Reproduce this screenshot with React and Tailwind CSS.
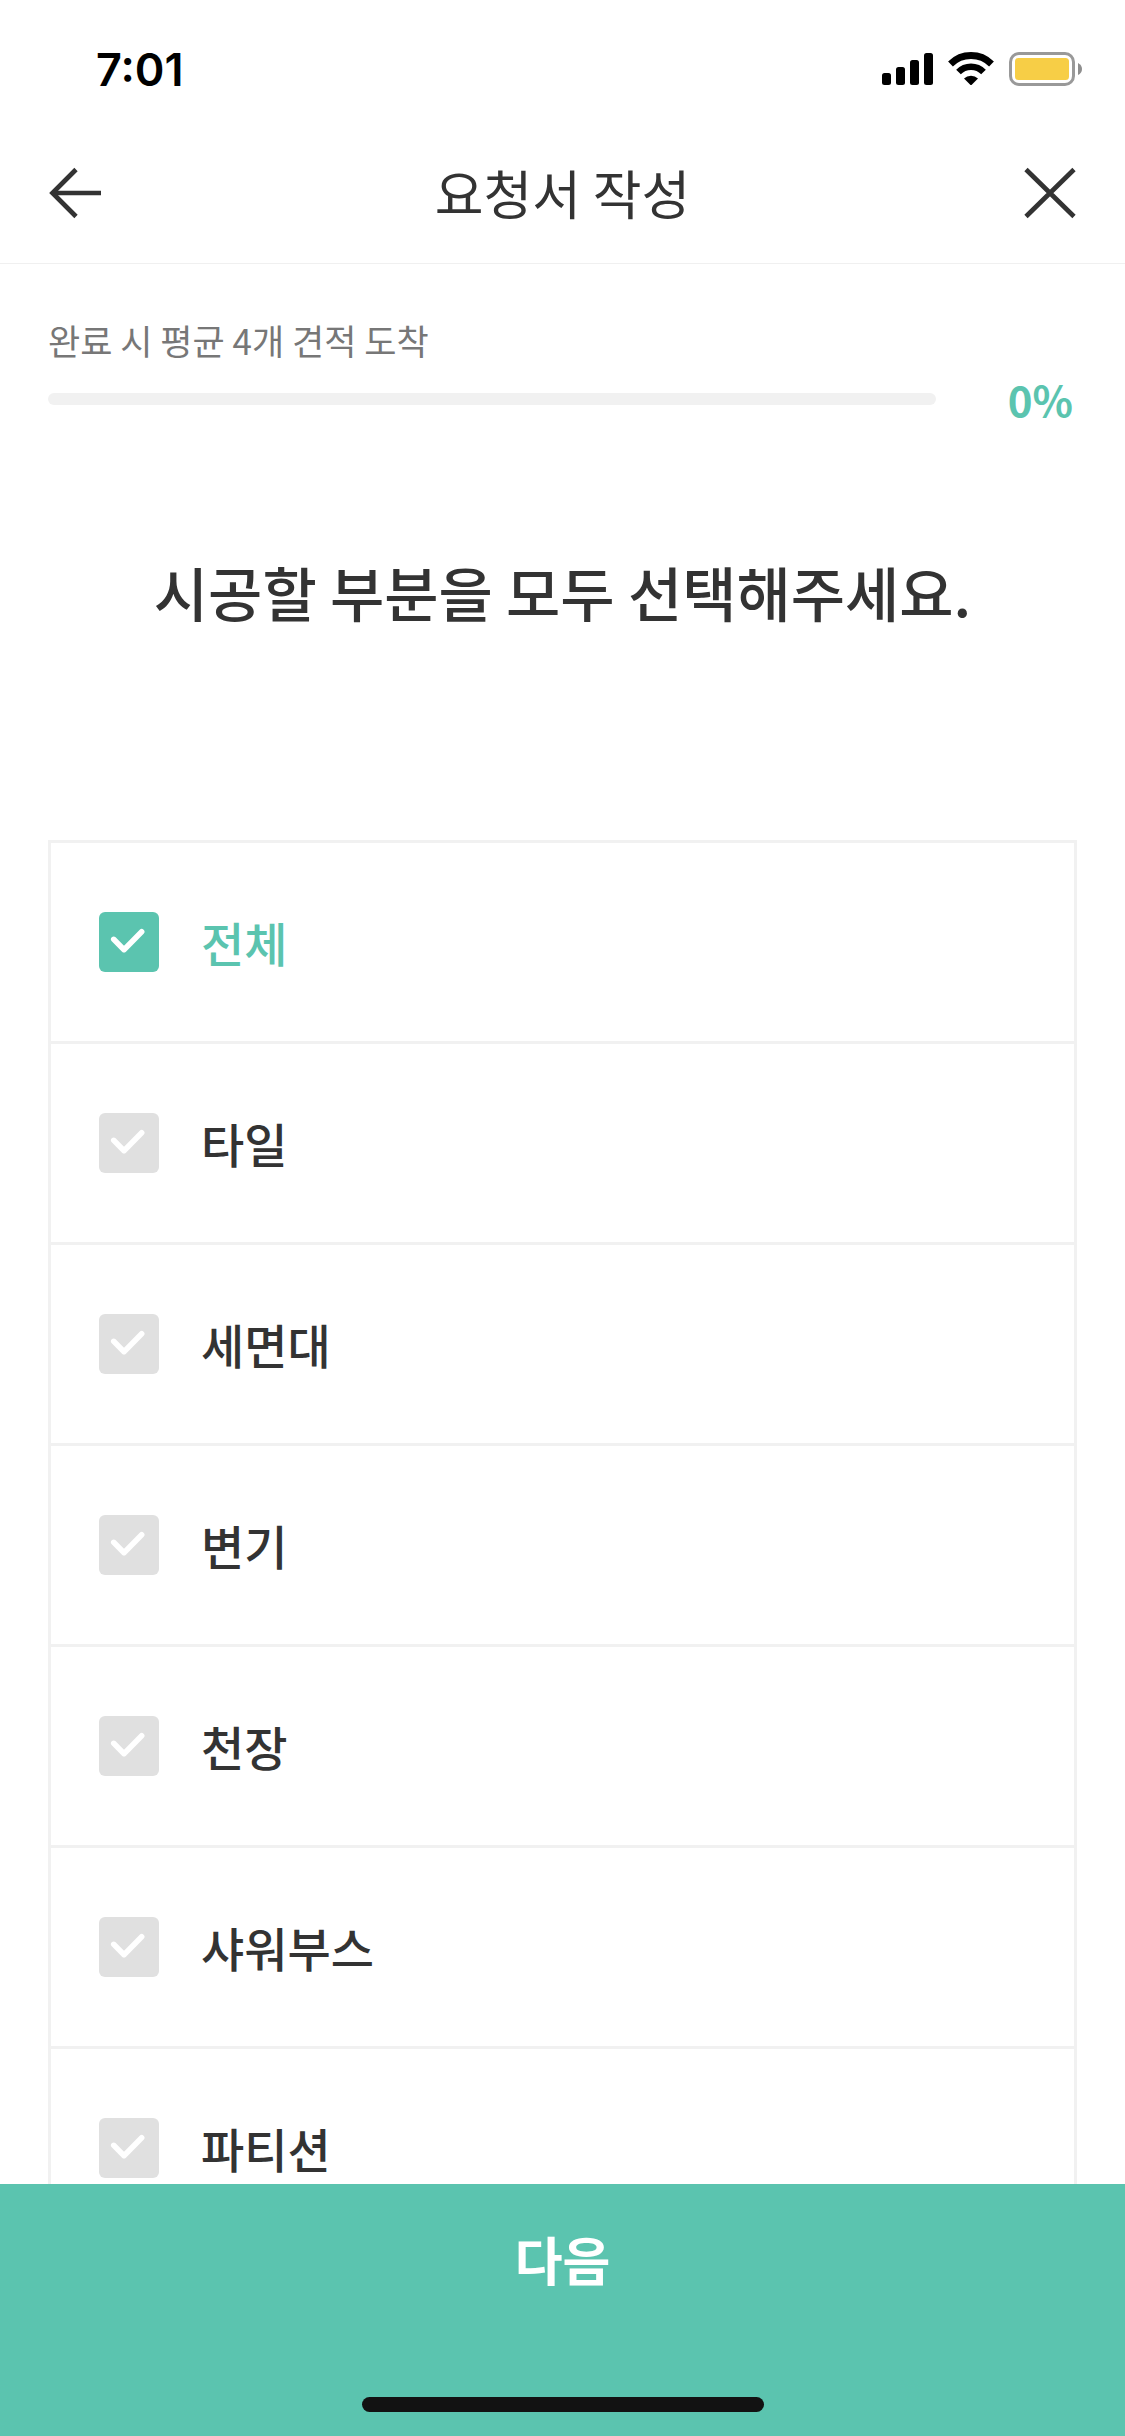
import React, { useState } from 'react';

const OPTIONS = ['전체', '타일', '세면대', '변기', '천장', '샤워부스', '파티션'];

function StatusBar() {
  return (
    <div className="flex h-[114px] shrink-0 items-center justify-between pt-6 pr-[42px] pl-24">
      <span className="font-['Inter',sans-serif] text-[45px] leading-none font-semibold text-black">7:01</span>
      <div className="flex items-center gap-[15px]">
        <svg className="h-[34px] w-[51px]" viewBox="0 0 51 34" fill="#000" aria-hidden="true">
          <rect x="0" y="21" width="9" height="12" rx="2.5" />
          <rect x="14" y="15" width="9" height="18" rx="2.5" />
          <rect x="28" y="8" width="9" height="25" rx="2.5" />
          <rect x="42" y="1" width="9" height="32" rx="2.5" />
        </svg>
        <svg className="h-[34px] w-[46px]" viewBox="0 0 46 34" aria-hidden="true">
          <path d="M2.500 12 A29 29 0 0 1 43.500 12" fill="none" stroke="#000" strokeWidth="6.800" />
          <path d="M10.500 20 A17.500 17.500 0 0 1 35.500 20" fill="none" stroke="#000" strokeWidth="6.500" />
          <path d="M16 26.500 A10 10 0 0 1 30 26.500 L24 32.500 Q23 33.500 22 32.500 Z" fill="#000" />
        </svg>
        <svg className="h-[34px] w-[74px]" viewBox="0 0 74 34" aria-hidden="true">
          <rect x="1.5" y="1.5" width="63" height="31" rx="8.5" fill="none" stroke="#999" strokeWidth="3" />
          <rect x="6" y="6" width="54" height="22" rx="3.5" fill="#f7ce46" />
          <path d="M69 11 Q73 13 73 17 Q73 21 69 23 Z" fill="#8e8e8e" />
        </svg>
      </div>
    </div>
  );
}

function Header() {
  return (
    <header className="flex h-[150px] shrink-0 items-center justify-between border-b border-[#f0f0f0] px-12 pt-2">
      <button type="button" aria-label="뒤로">
        <svg className="h-14 w-14" viewBox="0 0 56 56" fill="none" stroke="#333" strokeWidth="4.700" aria-hidden="true">
          <path d="M28 4.500 L4.500 28 L28 51.500" />
          <path d="M5 28 H53" />
        </svg>
      </button>
      <h1 className="text-[53px] leading-none">요청서 작성</h1>
      <button type="button" aria-label="닫기">
        <svg className="h-14 w-14" viewBox="0 0 56 56" fill="none" stroke="#333" strokeWidth="4.700" aria-hidden="true">
          <path d="M5 4.500 L53 51.500 M53 4.500 L5 51.500" />
        </svg>
      </button>
    </header>
  );
}

function Progress({ value }) {
  return (
    <section className="px-12 pt-[52px]">
      <p className="text-[35px] leading-[48px] text-[#777]">완료 시 평균 4개 견적 도착</p>
      <div className="flex items-center">
        <div className="h-3 flex-1 overflow-hidden rounded-full bg-[#f1f1f1]">
          <div className="h-full bg-[#5bc4af]" style={{ width: `${value}%` }} />
        </div>
        <span className="w-[141px] pr-1 text-right text-[42px] leading-[70px] font-bold text-[#5bc4af]">
          {value}%
        </span>
      </div>
    </section>
  );
}

function OptionRow({ label, checked, onChange }) {
  return (
    <li className="border-b-[3px] border-[#f1f1f1]">
      <label className="flex h-[198px] cursor-pointer items-center gap-[42px] px-12">
        <span className="grid shrink-0">
          <input
            type="checkbox"
            checked={checked}
            onChange={onChange}
            className="col-start-1 row-start-1 h-[60px] w-[60px] appearance-none rounded-md bg-[#e0e0e0] checked:bg-[#5bc4af]"
          />
          <svg
            className="pointer-events-none col-start-1 row-start-1 h-[60px] w-[60px]"
            viewBox="0 0 60 60"
            fill="none"
            stroke="#fff"
            strokeWidth="5.500"
            strokeLinecap="round"
            strokeLinejoin="round"
            aria-hidden="true"
          >
            <path d="M14.700 27.300 L25 37.700 L42.700 19.700" />
          </svg>
        </span>
        <span className={`text-[47px] leading-[60px] font-medium ${checked ? 'text-[#5bc4af]' : 'text-[#333]'}`}>
          {label}
        </span>
      </label>
    </li>
  );
}

export default function App() {
  const [selected, setSelected] = useState(['전체']);

  const toggle = (label) => {
    setSelected((prev) => (prev.includes(label) ? prev.filter((item) => item !== label) : [...prev, label]));
  };

  return (
    <div className="flex h-screen flex-col bg-white font-['Noto_Sans_CJK_KR',sans-serif] text-[#333]">
      <StatusBar />
      <Header />
      <main className="min-h-0 flex-1 overflow-y-auto [scrollbar-width:none]">
        <Progress value={0} />
        <h2 className="px-12 pt-[114px] text-center text-[59px] leading-[88px] font-medium">
          시공할 부분을 모두 선택해주세요.
        </h2>
        <ul className="mx-12 mt-[204px] border-x-[3px] border-t-[3px] border-[#f1f1f1]">
          {OPTIONS.map((label) => (
            <OptionRow
              key={label}
              label={label}
              checked={selected.includes(label)}
              onChange={() => toggle(label)}
            />
          ))}
        </ul>
      </main>
      <footer className="flex shrink-0 flex-col items-center bg-[#5bc4af] pb-6">
        <button type="button" className="h-[213px] w-full pb-16 text-[52px] leading-none font-bold text-white">
          다음
        </button>
        <div className="h-[15px] w-[402px] rounded-full bg-[#121212]" />
      </footer>
    </div>
  );
}
